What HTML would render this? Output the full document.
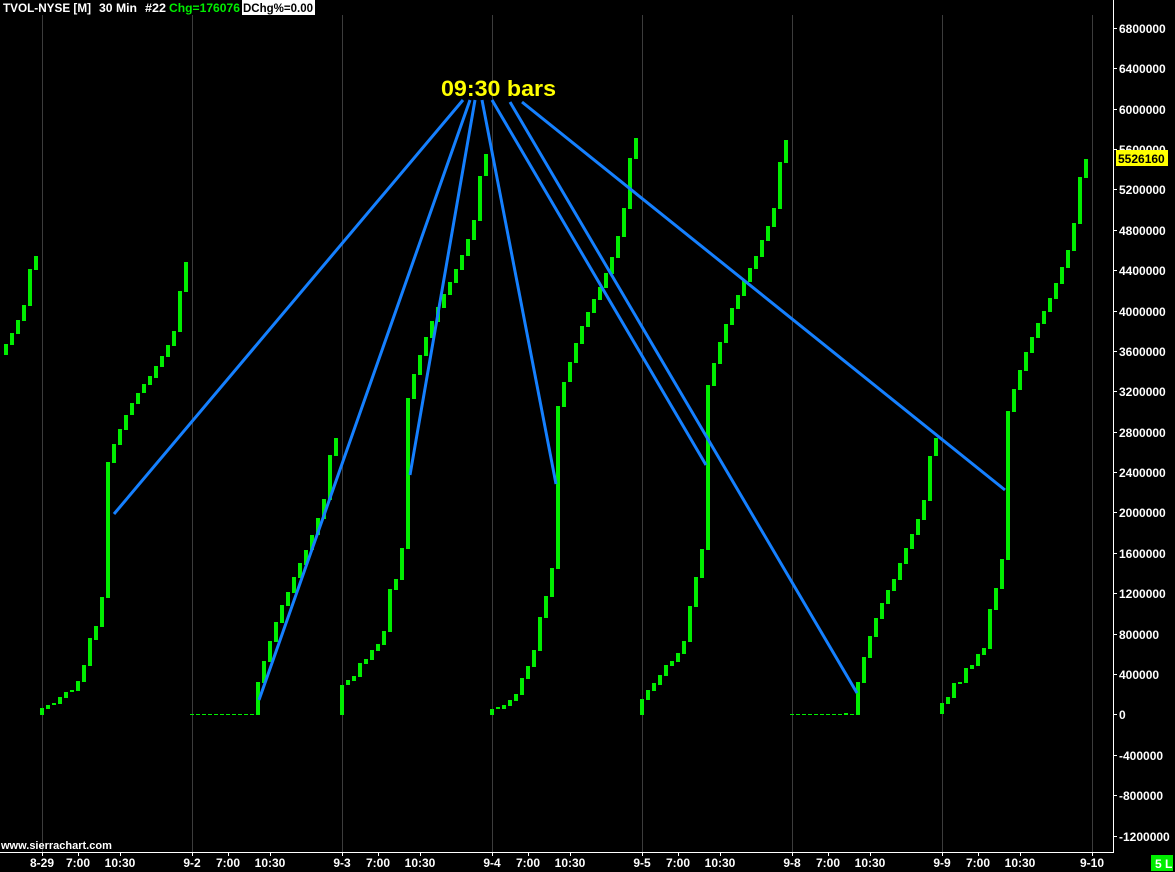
<!DOCTYPE html>
<html><head><meta charset="utf-8"><style>
html,body{margin:0;padding:0;background:#000;}
svg{display:block;}
text{font-family:"Liberation Sans",sans-serif;font-weight:bold;}
</style></head><body>
<svg width="1175" height="872" viewBox="0 0 1175 872" xmlns="http://www.w3.org/2000/svg">
<rect width="1175" height="872" fill="#000"/>
<g stroke="#3c3c3c" stroke-width="1">
<line x1="42.5" y1="15" x2="42.5" y2="852"/><line x1="192.5" y1="15" x2="192.5" y2="852"/>
<line x1="342.5" y1="15" x2="342.5" y2="852"/><line x1="492.5" y1="15" x2="492.5" y2="852"/>
<line x1="642.5" y1="15" x2="642.5" y2="852"/><line x1="792.5" y1="15" x2="792.5" y2="852"/>
<line x1="942.5" y1="15" x2="942.5" y2="852"/><line x1="1092.5" y1="15" x2="1092.5" y2="852"/>
</g>
<g stroke="#00ee00" stroke-width="1" stroke-dasharray="4,2">
<line x1="190" y1="714.5" x2="256" y2="714.5"/>
<line x1="790" y1="714.5" x2="856" y2="714.5"/>
</g>
<g fill="#00ee00">
<rect x="4" y="344" width="4" height="11"/><rect x="10" y="333" width="4" height="12"/><rect x="16" y="320" width="4" height="14"/><rect x="22" y="305" width="4" height="16"/><rect x="28" y="269" width="4" height="37"/><rect x="34" y="256" width="4" height="14"/>
<rect x="40" y="708" width="4" height="7"/><rect x="46" y="705" width="4" height="4"/><rect x="52" y="703" width="4" height="2"/><rect x="58" y="697" width="4" height="7"/><rect x="64" y="692" width="4" height="6"/><rect x="70" y="690" width="4" height="2"/><rect x="76" y="681" width="4" height="10"/><rect x="82" y="665" width="4" height="17"/><rect x="88" y="638" width="4" height="28"/><rect x="94" y="626" width="4" height="14"/><rect x="100" y="597" width="4" height="30"/><rect x="106" y="462" width="4" height="136"/><rect x="112" y="444" width="4" height="19"/><rect x="118" y="429" width="4" height="16"/><rect x="124" y="415" width="4" height="15"/><rect x="130" y="403" width="4" height="12"/><rect x="136" y="393" width="4" height="11"/><rect x="142" y="384" width="4" height="9"/><rect x="148" y="376" width="4" height="9"/><rect x="154" y="366" width="4" height="12"/><rect x="160" y="356" width="4" height="11"/><rect x="166" y="345" width="4" height="12"/><rect x="172" y="331" width="4" height="15"/><rect x="178" y="291" width="4" height="41"/><rect x="184" y="262" width="4" height="30"/>
<rect x="256" y="682" width="4" height="33"/><rect x="262" y="661" width="4" height="22"/><rect x="268" y="641" width="4" height="21"/><rect x="274" y="622" width="4" height="20"/><rect x="280" y="605" width="4" height="18"/><rect x="286" y="592" width="4" height="14"/><rect x="292" y="577" width="4" height="16"/><rect x="298" y="563" width="4" height="15"/><rect x="304" y="550" width="4" height="15"/><rect x="310" y="535" width="4" height="15"/><rect x="316" y="518" width="4" height="17"/><rect x="322" y="499" width="4" height="20"/><rect x="328" y="455" width="4" height="45"/><rect x="334" y="438" width="4" height="18"/>
<rect x="340" y="685" width="4" height="30"/><rect x="346" y="680" width="4" height="5"/><rect x="352" y="676" width="4" height="5"/><rect x="358" y="663" width="4" height="14"/><rect x="364" y="659" width="4" height="5"/><rect x="370" y="650" width="4" height="10"/><rect x="376" y="644" width="4" height="7"/><rect x="382" y="631" width="4" height="14"/><rect x="388" y="589" width="4" height="43"/><rect x="394" y="579" width="4" height="11"/><rect x="400" y="548" width="4" height="32"/><rect x="406" y="398" width="4" height="151"/><rect x="412" y="374" width="4" height="25"/><rect x="418" y="355" width="4" height="20"/><rect x="424" y="337" width="4" height="19"/><rect x="430" y="321" width="4" height="17"/><rect x="436" y="307" width="4" height="15"/><rect x="442" y="294" width="4" height="14"/><rect x="448" y="282" width="4" height="13"/><rect x="454" y="269" width="4" height="14"/><rect x="460" y="255" width="4" height="15"/><rect x="466" y="239" width="4" height="17"/><rect x="472" y="220" width="4" height="20"/><rect x="478" y="176" width="4" height="45"/><rect x="484" y="154" width="4" height="22"/>
<rect x="490" y="709" width="4" height="6"/><rect x="496" y="707" width="4" height="2"/><rect x="502" y="705" width="4" height="4"/><rect x="508" y="700" width="4" height="6"/><rect x="514" y="694" width="4" height="7"/><rect x="520" y="678" width="4" height="17"/><rect x="526" y="666" width="4" height="13"/><rect x="532" y="650" width="4" height="17"/><rect x="538" y="617" width="4" height="34"/><rect x="544" y="596" width="4" height="22"/><rect x="550" y="568" width="4" height="29"/><rect x="556" y="406" width="4" height="163"/><rect x="562" y="382" width="4" height="25"/><rect x="568" y="362" width="4" height="20"/><rect x="574" y="343" width="4" height="20"/><rect x="580" y="326" width="4" height="18"/><rect x="586" y="312" width="4" height="15"/><rect x="592" y="299" width="4" height="14"/><rect x="598" y="287" width="4" height="13"/><rect x="604" y="273" width="4" height="15"/><rect x="610" y="257" width="4" height="17"/><rect x="616" y="236" width="4" height="22"/><rect x="622" y="208" width="4" height="29"/><rect x="628" y="158" width="4" height="51"/><rect x="634" y="138" width="4" height="21"/>
<rect x="640" y="699" width="4" height="16"/><rect x="646" y="690" width="4" height="10"/><rect x="652" y="683" width="4" height="8"/><rect x="658" y="675" width="4" height="10"/><rect x="664" y="665" width="4" height="11"/><rect x="670" y="661" width="4" height="5"/><rect x="676" y="653" width="4" height="9"/><rect x="682" y="641" width="4" height="13"/><rect x="688" y="606" width="4" height="36"/><rect x="694" y="577" width="4" height="30"/><rect x="700" y="549" width="4" height="29"/><rect x="706" y="385" width="4" height="165"/><rect x="712" y="363" width="4" height="23"/><rect x="718" y="342" width="4" height="22"/><rect x="724" y="324" width="4" height="19"/><rect x="730" y="308" width="4" height="17"/><rect x="736" y="295" width="4" height="14"/><rect x="742" y="280" width="4" height="16"/><rect x="748" y="268" width="4" height="14"/><rect x="754" y="256" width="4" height="13"/><rect x="760" y="240" width="4" height="17"/><rect x="766" y="226" width="4" height="15"/><rect x="772" y="208" width="4" height="19"/><rect x="778" y="162" width="4" height="47"/><rect x="784" y="140" width="4" height="23"/>
<rect x="844" y="713" width="4" height="2"/>
<rect x="856" y="682" width="4" height="33"/><rect x="862" y="657" width="4" height="26"/><rect x="868" y="636" width="4" height="22"/><rect x="874" y="618" width="4" height="19"/><rect x="880" y="603" width="4" height="16"/><rect x="886" y="590" width="4" height="14"/><rect x="892" y="579" width="4" height="12"/><rect x="898" y="563" width="4" height="17"/><rect x="904" y="548" width="4" height="16"/><rect x="910" y="534" width="4" height="15"/><rect x="916" y="519" width="4" height="16"/><rect x="922" y="500" width="4" height="20"/><rect x="928" y="456" width="4" height="45"/><rect x="934" y="438" width="4" height="18"/>
<rect x="940" y="703" width="4" height="11"/><rect x="946" y="697" width="4" height="7"/><rect x="952" y="683" width="4" height="15"/><rect x="958" y="682" width="4" height="2"/><rect x="964" y="668" width="4" height="15"/><rect x="970" y="665" width="4" height="4"/><rect x="976" y="654" width="4" height="12"/><rect x="982" y="648" width="4" height="7"/><rect x="988" y="609" width="4" height="40"/><rect x="994" y="588" width="4" height="22"/><rect x="1000" y="559" width="4" height="30"/><rect x="1006" y="411" width="4" height="149"/><rect x="1012" y="389" width="4" height="23"/><rect x="1018" y="370" width="4" height="20"/><rect x="1024" y="352" width="4" height="19"/><rect x="1030" y="337" width="4" height="16"/><rect x="1036" y="323" width="4" height="15"/><rect x="1042" y="311" width="4" height="13"/><rect x="1048" y="298" width="4" height="14"/><rect x="1054" y="283" width="4" height="16"/><rect x="1060" y="267" width="4" height="17"/><rect x="1066" y="250" width="4" height="18"/><rect x="1072" y="223" width="4" height="28"/><rect x="1078" y="177" width="4" height="47"/><rect x="1084" y="159" width="4" height="19"/>
</g>
<g stroke="#1580ff" stroke-width="3" stroke-linecap="butt">
<line x1="463" y1="100" x2="114" y2="514"/>
<line x1="470" y1="100" x2="259" y2="700"/>
<line x1="475" y1="100" x2="410" y2="475"/>
<line x1="482" y1="100" x2="556" y2="484"/>
<line x1="492" y1="100" x2="706" y2="465"/>
<line x1="510" y1="102" x2="857" y2="693"/>
<line x1="522" y1="102" x2="1005" y2="490"/>
</g>
<text x="441" y="96" fill="#ffff00" font-size="22" textLength="115" lengthAdjust="spacingAndGlyphs">09:30 bars</text>
<line x1="1113.5" y1="0" x2="1113.5" y2="852" stroke="#fff" stroke-width="1"/>
<line x1="0" y1="852.5" x2="1114" y2="852.5" stroke="#fff" stroke-width="1"/>
<g stroke="#fff">
<line x1="1113" y1="28.5" x2="1117" y2="28.5"/><line x1="1113" y1="68.5" x2="1117" y2="68.5"/><line x1="1113" y1="109.5" x2="1117" y2="109.5"/><line x1="1113" y1="149.5" x2="1117" y2="149.5"/><line x1="1113" y1="189.5" x2="1117" y2="189.5"/><line x1="1113" y1="230.5" x2="1117" y2="230.5"/><line x1="1113" y1="270.5" x2="1117" y2="270.5"/><line x1="1113" y1="311.5" x2="1117" y2="311.5"/><line x1="1113" y1="351.5" x2="1117" y2="351.5"/><line x1="1113" y1="391.5" x2="1117" y2="391.5"/><line x1="1113" y1="432.5" x2="1117" y2="432.5"/><line x1="1113" y1="472.5" x2="1117" y2="472.5"/><line x1="1113" y1="512.5" x2="1117" y2="512.5"/><line x1="1113" y1="553.5" x2="1117" y2="553.5"/><line x1="1113" y1="593.5" x2="1117" y2="593.5"/><line x1="1113" y1="634.5" x2="1117" y2="634.5"/><line x1="1113" y1="674.5" x2="1117" y2="674.5"/><line x1="1113" y1="714.5" x2="1117" y2="714.5"/><line x1="1113" y1="755.5" x2="1117" y2="755.5"/><line x1="1113" y1="795.5" x2="1117" y2="795.5"/><line x1="1113" y1="836.5" x2="1117" y2="836.5"/>
</g>
<g fill="#fff" font-size="12">
<text x="1119" y="33">6800000</text><text x="1119" y="73">6400000</text><text x="1119" y="114">6000000</text><text x="1119" y="154">5600000</text><text x="1119" y="194">5200000</text><text x="1119" y="235">4800000</text><text x="1119" y="275">4400000</text><text x="1119" y="316">4000000</text><text x="1119" y="356">3600000</text><text x="1119" y="396">3200000</text><text x="1119" y="437">2800000</text><text x="1119" y="477">2400000</text><text x="1119" y="517">2000000</text><text x="1119" y="558">1600000</text><text x="1119" y="598">1200000</text><text x="1119" y="639">800000</text><text x="1119" y="679">400000</text><text x="1119" y="719">0</text><text x="1119" y="760">-400000</text><text x="1119" y="800">-800000</text><text x="1119" y="841">-1200000</text>
</g>
<rect x="1116" y="150" width="52" height="16" fill="#ffff00"/>
<text x="1118" y="163" fill="#000" font-size="12">5526160</text>
<g stroke="#fff">
<line x1="42.5" y1="852" x2="42.5" y2="856"/><line x1="78.5" y1="852" x2="78.5" y2="856"/><line x1="120.5" y1="852" x2="120.5" y2="856"/>
<line x1="192.5" y1="852" x2="192.5" y2="856"/><line x1="228.5" y1="852" x2="228.5" y2="856"/><line x1="270.5" y1="852" x2="270.5" y2="856"/>
<line x1="342.5" y1="852" x2="342.5" y2="856"/><line x1="378.5" y1="852" x2="378.5" y2="856"/><line x1="420.5" y1="852" x2="420.5" y2="856"/>
<line x1="492.5" y1="852" x2="492.5" y2="856"/><line x1="528.5" y1="852" x2="528.5" y2="856"/><line x1="570.5" y1="852" x2="570.5" y2="856"/>
<line x1="642.5" y1="852" x2="642.5" y2="856"/><line x1="678.5" y1="852" x2="678.5" y2="856"/><line x1="720.5" y1="852" x2="720.5" y2="856"/>
<line x1="792.5" y1="852" x2="792.5" y2="856"/><line x1="828.5" y1="852" x2="828.5" y2="856"/><line x1="870.5" y1="852" x2="870.5" y2="856"/>
<line x1="942.5" y1="852" x2="942.5" y2="856"/><line x1="978.5" y1="852" x2="978.5" y2="856"/><line x1="1020.5" y1="852" x2="1020.5" y2="856"/>
<line x1="1092.5" y1="852" x2="1092.5" y2="856"/>
</g>
<g fill="#fff" font-size="12" text-anchor="middle">
<text x="42" y="867">8-29</text><text x="78" y="867">7:00</text><text x="120" y="867">10:30</text>
<text x="192" y="867">9-2</text><text x="228" y="867">7:00</text><text x="270" y="867">10:30</text>
<text x="342" y="867">9-3</text><text x="378" y="867">7:00</text><text x="420" y="867">10:30</text>
<text x="492" y="867">9-4</text><text x="528" y="867">7:00</text><text x="570" y="867">10:30</text>
<text x="642" y="867">9-5</text><text x="678" y="867">7:00</text><text x="720" y="867">10:30</text>
<text x="792" y="867">9-8</text><text x="828" y="867">7:00</text><text x="870" y="867">10:30</text>
<text x="942" y="867">9-9</text><text x="978" y="867">7:00</text><text x="1020" y="867">10:30</text>
<text x="1092" y="867">9-10</text>
</g>
<text x="1" y="849" fill="#fff" font-size="11">www.sierrachart.com</text>
<rect x="1151" y="855" width="22" height="16" fill="#00ee00"/>
<text x="1155" y="868" fill="#fff" font-size="12">5 L</text>
<rect x="242" y="0" width="73" height="15" fill="#fff"/>
<g font-size="12">
<text x="3" y="12" fill="#fff" textLength="88" lengthAdjust="spacingAndGlyphs">TVOL-NYSE [M]</text>
<text x="99" y="12" fill="#fff" textLength="38" lengthAdjust="spacingAndGlyphs">30 Min</text>
<text x="145" y="12" fill="#fff" textLength="21" lengthAdjust="spacingAndGlyphs">#22</text>
<text x="169" y="12" fill="#00ee00" textLength="71" lengthAdjust="spacingAndGlyphs">Chg=176076</text>
<text x="243" y="12" fill="#000" textLength="70" lengthAdjust="spacingAndGlyphs">DChg%=0.00</text>
</g>
</svg>
</body></html>
